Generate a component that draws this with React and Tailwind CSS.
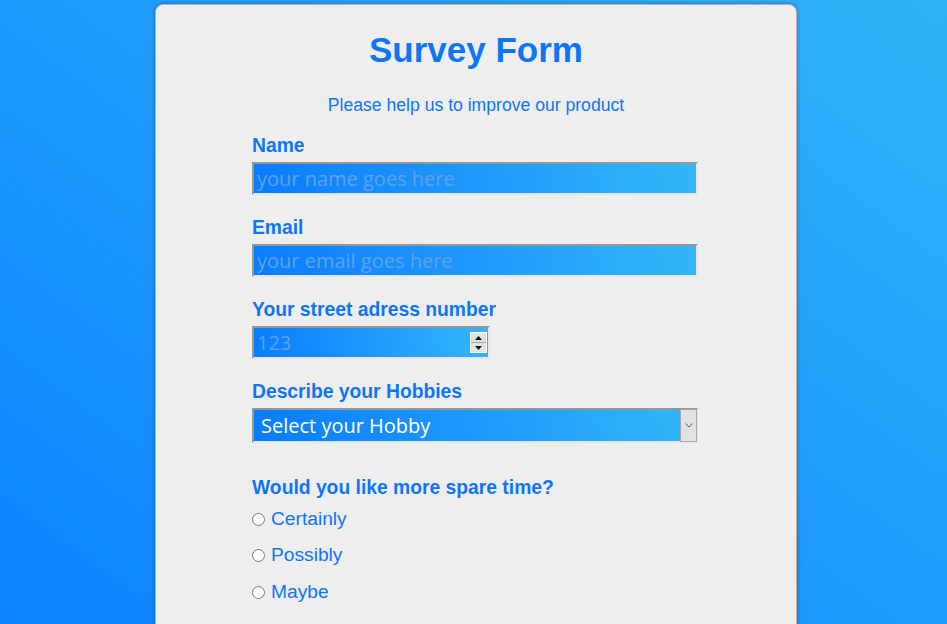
import React from 'react';

const labelCls = 'block text-[19.3px] leading-[22px] font-bold text-[#0e76f6]';
const fieldCls =
  'block h-[33px] border-2 border-t-[#979797] border-l-[#979797] border-r-[#e6e6e6] border-b-[#e6e6e6] bg-[linear-gradient(80deg,#0a7cff,#34b6f8)] px-[3px] text-[20px] text-white outline-none placeholder:text-[#5fa2e6]';

const Spinner = () => (
  <div className="absolute right-[3px] top-[6px] flex h-[21px] w-[17px] flex-col border border-white bg-[#e2e2e2]">
    <div className="flex flex-1 items-center justify-center border-b border-[#a8a8a8]">
      <svg width="7" height="4" viewBox="0 0 7 4">
        <path d="M0 4 L3.5 0 L7 4 Z" fill="#111" />
      </svg>
    </div>
    <div className="flex flex-1 items-center justify-center">
      <svg width="7" height="4" viewBox="0 0 7 4">
        <path d="M0 0 L3.5 4 L7 0 Z" fill="#111" />
      </svg>
    </div>
  </div>
);

const Radio = ({ label }) => (
  <label className="flex h-[22px] items-center gap-[6px] text-[19.2px] text-[#0e76f6]">
    <input type="radio" name="spare" className="m-0 h-[13px] w-[13px]" />
    <span>{label}</span>
  </label>
);

export default function App() {
  return (
    <div
      className="min-h-screen overflow-hidden bg-[linear-gradient(to_top_right,#0a80ff,#31b3f8)] pt-1"
      style={{ fontFamily: '"Liberation Sans", Arial, sans-serif' }}
    >
      <div className="ml-[155px] w-[642px] rounded-t-lg border border-[#b3b3b3] bg-[#eeeeee] pb-24 pt-[25px] shadow-[0_0_4px_rgba(0,0,0,0.35)]">
        <h1 className="text-center text-[35px] font-bold leading-[40px] text-[#0e76f6]">Survey Form</h1>
        <p className="mt-[25px] text-center text-[17.6px] leading-[20px] text-[#0e76f6]">
          Please help us to improve our product
        </p>

        <form className="ml-[96px] mt-[20px] w-[446px]">
          <label className={labelCls}>Name</label>
          <input
            type="text"
            placeholder="your name goes here"
            className={`${fieldCls} mt-[5px] w-full`}
            style={{ fontFamily: '"Open Sans", sans-serif' }}
          />

          <label className={`${labelCls} mt-[22px]`}>Email</label>
          <input
            type="email"
            placeholder="your email goes here"
            className={`${fieldCls} mt-[5px] w-full`}
            style={{ fontFamily: '"Open Sans", sans-serif' }}
          />

          <label className={`${labelCls} mt-[22px]`}>Your street adress number</label>
          <div className="relative mt-[5px] w-[238px]">
            <input
              type="text"
              placeholder="123"
              className={`${fieldCls} w-full`}
              style={{ fontFamily: '"Open Sans", sans-serif' }}
            />
            <Spinner />
          </div>

          <label className={`${labelCls} mt-[22px]`}>Describe your Hobbies</label>
          <div className="relative mt-[5px] w-full">
            <select
              className="block h-[35px] w-full appearance-none border-2 border-t-[#979797] border-l-[#979797] border-r-[#e6e6e6] border-b-[#e6e6e6] bg-[linear-gradient(80deg,#0a7cff,#34b6f8)] pl-[7px] text-[20px] text-white outline-none"
              style={{ fontFamily: '"Open Sans", sans-serif' }}
              defaultValue=""
            >
              <option value="">Select your Hobby</option>
              <option value="sport">Sport</option>
              <option value="music">Music</option>
              <option value="reading">Reading</option>
            </select>
            <div className="pointer-events-none absolute right-[1px] top-[1px] flex h-[33px] w-[17px] items-center justify-center border border-[#a6a6a6] bg-[#e2e2e2]">
              <svg width="8" height="5" viewBox="0 0 8 5">
                <path d="M0.5 0.5 L4 4 L7.5 0.5" fill="none" stroke="#555" strokeWidth="1" />
              </svg>
            </div>
          </div>

          <p className={`${labelCls} mt-[34px]`}>Would you like more spare time?</p>
          <div className="mt-[9px] flex flex-col gap-[14.5px]">
            <Radio label="Certainly" />
            <Radio label="Possibly" />
            <Radio label="Maybe" />
          </div>
        </form>
      </div>
    </div>
  );
}
